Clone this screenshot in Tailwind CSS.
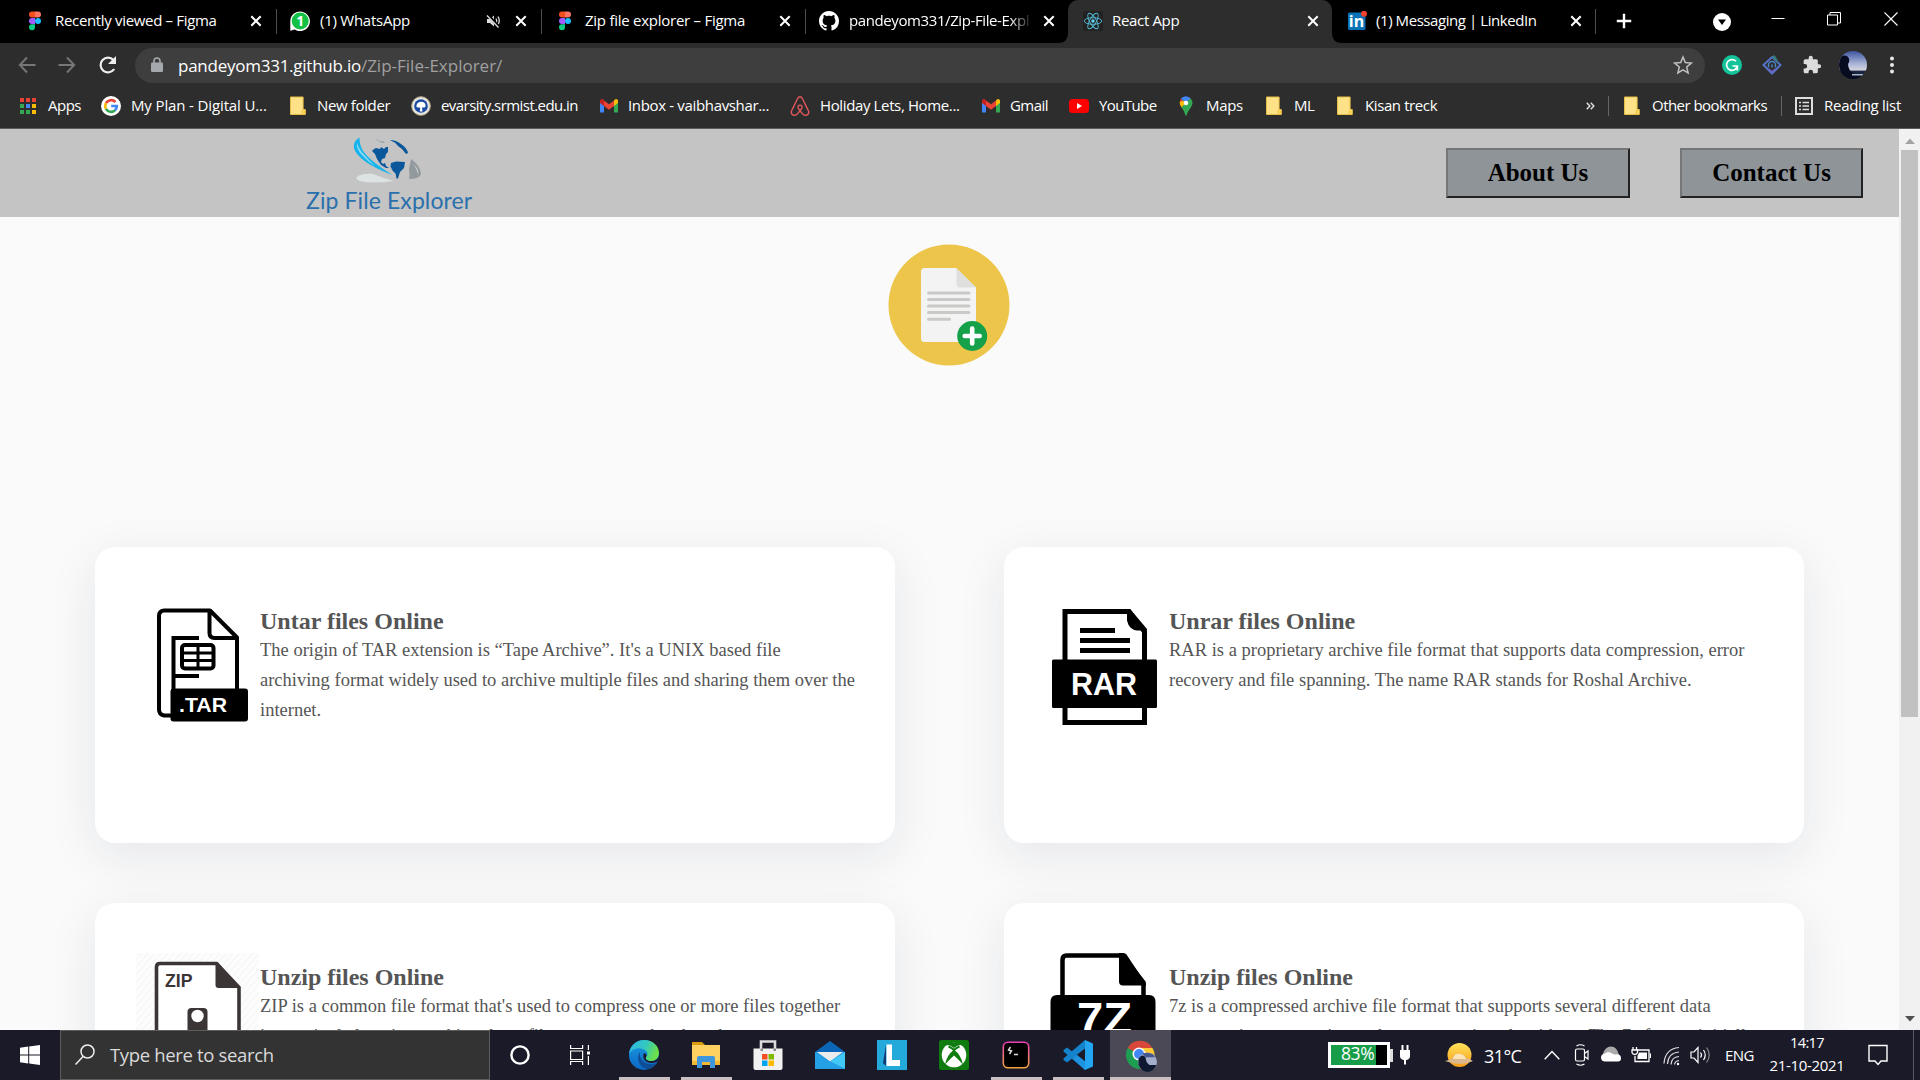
<!DOCTYPE html>
<html lang="en">
<head>
<meta charset="utf-8">
<title>React App</title>
<script src="https://cdn.jsdelivr.net/npm/@tailwindcss/browser@4"></script>
</head>
<body class="w-[1920px] h-[1080px] overflow-hidden bg-black font-['Open_Sans','Noto_Sans',sans-serif] text-[15px] text-white flex flex-col">

<!-- Shared icons -->
<svg class="hidden">
  <symbol id="close" viewBox="0 0 20 20"><path d="M5.3 5.3 14.7 14.7M14.7 5.3 5.3 14.7" stroke="#fff" stroke-width="2" fill="none"/></symbol>
  <symbol id="figma" viewBox="0 0 20 20"><path d="M7 .6h3v6H7a3 3 0 0 1 0-6z" fill="#f24e1e"/><path d="M10 .6h3a3 3 0 0 1 0 6h-3z" fill="#ff7262"/><path d="M7 6.900h3v6H7a3 3 0 0 1 0-6z" fill="#a259ff"/><circle cx="13" cy="9.900" r="3" fill="#1abcfe"/><path d="M7 13.200h3v3a3 3 0 1 1-3-3z" fill="#0acf83"/></symbol>
  <symbol id="folder" viewBox="0 0 20 20"><path d="M2.500 1h12.600v12.500h2V18.500H2.500z" fill="#ffe287" stroke="#e6bd45"/><path d="M14 18.500v-3l1.200-2h2v5z" fill="#fbd75d" stroke="#e6bd45" stroke-width=".7"/></symbol>
  <symbol id="gmail" viewBox="0 0 20 20"><path d="M1 6v10.500h4V8z" fill="#4285f4"/><path d="M15 8v8.500h4V6z" fill="#34a853"/><path d="M15 4.500V10l4-3V5c0-2-2-2.600-3.200-1.500z" fill="#fbbc04"/><path d="M5 10V4.500l5 3.800 5-3.800V10l-5 3.800z" fill="#ea4335"/><path d="M1 5v2l4 3V4.500L4.200 3.500C3 2.500 1 3.200 1 5z" fill="#c5221f"/></symbol>
</svg>

<!-- Tab strip -->
<div class="h-[43px] shrink-0 flex items-start bg-black">
  <div class="w-[276px] h-[42px] flex items-center pl-[25px] pr-[10px]">
    <svg class="w-5 h-5 mr-2.5"><use href="#figma"/></svg>
    <span class="flex-1 whitespace-nowrap pb-[2px] tracking-[-0.33px]">Recently viewed – Figma</span>
    <svg class="w-5 h-5"><use href="#close"/></svg>
  </div>
  <div class="w-[265px] h-[42px] flex items-center pl-[14px] pr-[10px] relative">
    <div class="absolute left-0 top-[9px] w-px h-[25px] bg-[#4d4d4d]"></div>
    <svg class="w-5 h-5 mr-2.5" viewBox="0 0 20 20"><path d="M.3 19.700V10a9.800 9.800 0 1 1 4.500 8.500z" fill="#fff"/><circle cx="10.200" cy="9.900" r="8.500" fill="#12c143"/><text x="10.300" y="14.800" text-anchor="middle" font-size="14" font-weight="700" fill="#fff">1</text></svg>
    <span class="flex-1 whitespace-nowrap pb-[2px] tracking-[-0.25px]">(1) WhatsApp</span>
    <svg class="w-5 h-5 mr-2" viewBox="0 0 20 20" fill="none" stroke="#ddd" stroke-width="1.300"><path d="M4 8h3l4-3.500v11L7 12H4z" fill="#ddd" stroke="none"/><path d="M13 7.500q1.500 2.500 0 5M15 5.500q2.500 4.500 0 8"/><path d="M4.500 3.500 16.500 16.500" stroke="#000" stroke-width="3"/><path d="M4 4.500 15.500 16.500"/></svg>
    <svg class="w-5 h-5"><use href="#close"/></svg>
  </div>
  <div class="w-[264px] h-[42px] flex items-center pl-[14px] pr-[10px] relative">
    <div class="absolute left-0 top-[9px] w-px h-[25px] bg-[#4d4d4d]"></div>
    <svg class="w-5 h-5 mr-2.5"><use href="#figma"/></svg>
    <span class="flex-1 whitespace-nowrap pb-[2px] tracking-[-0.26px]">Zip file explorer – Figma</span>
    <svg class="w-5 h-5"><use href="#close"/></svg>
  </div>
  <div class="w-[263px] h-[42px] flex items-center pl-[14px] pr-[9px] relative">
    <div class="absolute left-0 top-[9px] w-px h-[25px] bg-[#4d4d4d]"></div>
    <svg class="w-5 h-5 mr-2.5" viewBox="0 0 16 16"><path fill="#fff" d="M8 0C3.580 0 0 3.580 0 8c0 3.540 2.290 6.530 5.470 7.590.4.070.55-.17.55-.38 0-.19-.01-.82-.01-1.490-2.010.37-2.530-.49-2.690-.94-.09-.23-.48-.94-.82-1.130-.28-.15-.68-.52-.01-.53.63-.01 1.080.58 1.230.82.72 1.210 1.870.87 2.330.66.07-.52.28-.87.51-1.070-1.780-.2-3.640-.89-3.640-3.950 0-.87.31-1.590.82-2.150-.08-.2-.36-1.020.08-2.120 0 0 .67-.21 2.200.82.64-.18 1.320-.27 2-.27s1.360.09 2 .27c1.530-1.040 2.200-.82 2.200-.82.44 1.100.16 1.920.08 2.120.51.56.82 1.270.82 2.150 0 3.070-1.870 3.750-3.650 3.950.29.25.54.73.54 1.480 0 1.070-.01 1.930-.01 2.200 0 .21.15.46.55.38A8.010 8.010 0 0 0 16 8c0-4.420-3.580-8-8-8z"/></svg>
    <span class="w-[183px] overflow-hidden whitespace-nowrap pb-[2px] tracking-[-0.4px] mask-r-from-88% mask-r-to-100%">pandeyom331/Zip-File-Expl</span>
    <svg class="w-5 h-5 ml-auto"><use href="#close"/></svg>
  </div>
  <div class="w-[264px] h-[43px] flex items-center pb-px pl-[15px] pr-[9px] relative bg-[#2d2d2d] rounded-t-[10px]">
    <svg class="absolute -left-[10px] bottom-0 w-[10px] h-[10px]" viewBox="0 0 10 10"><path d="M10 0v10H0Q10 10 10 0z" fill="#2d2d2d"/></svg>
    <svg class="absolute -right-[10px] bottom-0 w-[10px] h-[10px]" viewBox="0 0 10 10"><path d="M0 0v10h10Q0 10 0 0z" fill="#2d2d2d"/></svg>
    <svg class="w-5 h-5 mr-[9px]" viewBox="0 0 20 20"><rect width="20" height="20" rx="2" fill="#222"/><g fill="none" stroke="#61dafb" stroke-width=".9" opacity=".85"><ellipse cx="10" cy="10" rx="8.800" ry="3.300"/><ellipse cx="10" cy="10" rx="8.800" ry="3.300" transform="rotate(60 10 10)"/><ellipse cx="10" cy="10" rx="8.800" ry="3.300" transform="rotate(120 10 10)"/></g><circle cx="10" cy="10" r="1.700" fill="#61dafb"/></svg>
    <span class="flex-1 whitespace-nowrap pb-[2px] tracking-[-0.33px]">React App</span>
    <svg class="w-5 h-5"><use href="#close"/></svg>
  </div>
  <div class="w-[264px] h-[42px] flex items-center pl-[15px] pr-[10px] relative">
    <div class="absolute right-0 top-[9px] w-px h-[25px] bg-[#4d4d4d]"></div>
    <svg class="w-5 h-5 mr-[9px]" viewBox="0 0 20 20"><rect x="1" y="1.500" width="17.500" height="17.500" rx="1.500" fill="#0a73b8"/><text x="9.500" y="16" text-anchor="middle" font-size="16" font-weight="700" fill="#fff">in</text><circle cx="17" cy="2.800" r="3" fill="#f0402f"/></svg>
    <span class="flex-1 whitespace-nowrap pb-[2px] tracking-[-0.43px]">(1) Messaging | LinkedIn</span>
    <svg class="w-5 h-5"><use href="#close"/></svg>
  </div>
  <svg class="w-4 h-4 mt-[13px] ml-[20px]" viewBox="0 0 16 16"><path d="M8 .8v14.400M.8 8h14.400" stroke="#fff" stroke-width="2.400"/></svg>
  <svg class="w-[18px] h-[18px] mt-[13px] ml-[81px]" viewBox="0 0 18 18"><circle cx="9" cy="9" r="9" fill="#fff"/><path d="M5 6.500h8L9 12z" fill="#000"/></svg>
  <svg class="w-[14px] h-[14px] mt-[12px] ml-[40px]" viewBox="0 0 14 14"><path d="M.5 6.500h13" stroke="#fff"/></svg>
  <svg class="w-[14px] h-[14px] mt-[12px] ml-[42px]" viewBox="0 0 14 14" fill="none" stroke="#fff"><path d="M.5 3h10v10h-10zM3 3V.5h10.500v10.500h-3"/></svg>
  <svg class="w-[14px] h-[14px] mt-[12px] ml-[43px]" viewBox="0 0 14 14"><path d="M.5.5l13 13M13.500.5l-13 13" stroke="#fff" stroke-width="1.100"/></svg>
</div>

<!-- Address bar -->
<div class="h-[44px] shrink-0 bg-[#2d2d2d] flex items-center">
  <svg class="w-[18px] h-[18px] ml-[18px]" viewBox="0 0 18 18" fill="none" stroke="#777" stroke-width="1.900"><path d="M17.500 9H2M9 1.500 1.800 9 9 16.500"/></svg>
  <svg class="w-[18px] h-[18px] ml-[22px]" viewBox="0 0 18 18" fill="none" stroke="#777" stroke-width="1.900"><path d="M.5 9H16M9 1.500 16.200 9 9 16.500"/></svg>
  <svg class="w-[20px] h-[20px] ml-[22px]" viewBox="0 0 20 20"><path d="M16.200 14A7.400 7.400 0 1 1 15.500 5" fill="none" stroke="#eee" stroke-width="2.200"/><path d="M18 1v8h-8z" fill="#eee"/></svg>
  <div class="w-[1570px] h-[35px] ml-[17px] rounded-full bg-[#3e3e3e] flex items-center pl-[16px] pr-[12px]">
    <svg class="w-[12px] h-[16px] mr-[15px]" viewBox="0 0 12 16"><rect y="5.500" width="12" height="9.500" rx="1.200" fill="#a5a8ac"/><path d="M3 6V4a3 3 0 0 1 6 0v2" fill="none" stroke="#a5a8ac" stroke-width="1.600"/></svg>
    <span class="text-[17px] tracking-[-0.25px] pt-px">pandeyom331.github.io</span><span class="text-[17px] text-[#a0a0a0] flex-1 pt-px">/Zip-File-Explorer/</span>
    <svg class="w-5 h-5" viewBox="0 0 20 20"><path d="m10 2 2.300 5.600 6 .5-4.600 3.900 1.400 5.900L10 14.800l-5.100 3.100L6.300 12 1.700 8.100l6-.5z" fill="none" stroke="#c0c0c0" stroke-width="1.500"/></svg>
  </div>
  <svg class="w-5 h-5 ml-[17px]" viewBox="0 0 20 20"><circle cx="10" cy="10" r="10" fill="#15c39a"/><path d="M14 6.300A5.400 5.400 0 1 0 15.300 11H10.500M15.300 11v4.500" fill="none" stroke="#fff" stroke-width="1.700"/></svg>
  <svg class="w-5 h-5 ml-[20px]" viewBox="0 0 20 20"><path d="M10 2 18.500 10 10 18.500 1.500 10z" fill="none" stroke="#5572c9" stroke-width="2"/><path d="M10 2.500 17 9l-3-7-2-2z" fill="#347e7d"/><path d="M6.500 12.500v-2.500a3.500 3.500 0 0 1 7 0v2.500M10 9.500v3" fill="none" stroke="#4d83c4" stroke-width="1.500"/><path d="m7 14 3 3 3-3" fill="none" stroke="#7562c4" stroke-width="1.500"/></svg>
  <svg class="w-5 h-5 ml-[20px]" viewBox="0 0 24 24"><path fill="#dcdcdc" d="M20.500 11H19V7a2 2 0 0 0-2-2h-4V3.500a2.500 2.500 0 0 0-5 0V5H4a2 2 0 0 0-2 2v3.800h1.500a2.700 2.700 0 0 1 0 5.400H2V20a2 2 0 0 0 2 2h3.800v-1.500a2.700 2.700 0 0 1 5.400 0V22H17a2 2 0 0 0 2-2v-4h1.500a2.500 2.500 0 0 0 0-5z"/></svg>
  <svg class="w-7 h-7 ml-[17px] rounded-full" viewBox="0 0 28 28"><defs><linearGradient id="sky" x1="0" y1="0" x2="0" y2="1"><stop offset="0" stop-color="#3e55a0"/><stop offset=".45" stop-color="#a9b3d6"/><stop offset=".68" stop-color="#d5d5de"/><stop offset=".72" stop-color="#1b2744"/><stop offset="1" stop-color="#101a33"/></linearGradient></defs><rect width="28" height="28" fill="url(#sky)"/><path d="M0 8q3-5 8-3 4 3 1 8 0 6 6 10l6 2v3H0z" fill="#060d20"/><path d="M13 23h11v1.500H13z" fill="#a9b4c6"/></svg>
  <svg class="w-[6px] h-[18px] ml-[22px]" viewBox="0 0 6 18" fill="#e8e8e8"><circle cx="3" cy="2.500" r="2"/><circle cx="3" cy="9" r="2"/><circle cx="3" cy="15.500" r="2"/></svg>
</div>

<!-- Bookmarks bar -->
<div class="h-[42px] shrink-0 bg-[#2d2d2d] border-b border-[#5c5c5c] flex items-center pl-[18px] pb-[3px] whitespace-nowrap">
  <div class="w-[83px] flex items-center gap-2.5"><svg class="w-5 h-5 shrink-0" viewBox="0 0 20 20"><path d="M2 2h4v4H2zM8 2h4v4H8zM14 2h4v4h-4z" fill="#ea4335"/><path d="M2 8h4v4H2zM2 14h4v4H2z" fill="#34a853"/><path d="M8 8h4v4H8z" fill="#4285f4"/><path d="M14 8h4v4h-4zM14 14h4v4h-4z" fill="#fbbc04"/><path d="M8 14h4v4H8z" fill="#34a853"/></svg><span class="pb-[2px] tracking-[-0.5px]">Apps</span></div>
  <div class="w-[187px] flex items-center gap-2.5"><svg class="w-5 h-5 shrink-0" viewBox="0 0 20 20"><circle cx="10" cy="10" r="10" fill="#fff"/><g fill="none" stroke-width="2.600"><path d="M14.400 6A5.800 5.800 0 0 0 5 7.200" stroke="#ea4335"/><path d="M5 7.200a5.800 5.800 0 0 0 0 5.600" stroke="#fbbc04"/><path d="M5 12.800a5.800 5.800 0 0 0 9 1.500" stroke="#34a853"/><path d="M14 14.300A5.800 5.800 0 0 0 15.800 10H10.200" stroke="#4285f4"/></g></svg><span class="pb-[2px] tracking-[-0.13px]">My Plan - Digital U...</span></div>
  <div class="w-[123px] flex items-center gap-[9px]"><svg class="w-5 h-5 shrink-0"><use href="#folder"/></svg><span class="pb-[2px] tracking-[-0.36px]">New folder</span></div>
  <div class="w-[188px] flex items-center gap-2.5"><svg class="w-5 h-5 shrink-0" viewBox="0 0 20 20"><circle cx="10" cy="10" r="9.300" fill="#e8e6df" stroke="#b9ae92"/><circle cx="10" cy="10" r="6.800" fill="#1a4aa3"/><path d="M5.500 11q-.5-4 3-5 5-1 6 3 .5 3-2 2.500H11l.5 4H8.800l.4-4H7z" fill="#fff"/></svg><span class="pb-[2px] tracking-[-0.56px]">evarsity.srmist.edu.in</span></div>
  <div class="w-[191px] flex items-center gap-[9px]"><svg class="w-5 h-5 shrink-0"><use href="#gmail"/></svg><span class="pb-[2px] tracking-[-0.34px]">Inbox - vaibhavshar...</span></div>
  <div class="w-[191px] flex items-center gap-2.5"><svg class="w-5 h-5 shrink-0" viewBox="0 0 20 20" fill="none" stroke="#e0565b" stroke-width="1.400"><path d="M10 .8c1.500 0 2 1 2.500 2 2 4.200 4.500 8.800 6 12.200 1.200 3.500-2.800 5.500-5.500 3.200-5-4.500-6.800-8.900-3-9.100 3.800.2 2 4.600-3 9.100C4.300 20.500.3 18.500 1.500 15 3 11.600 5.500 7 7.500 2.800 8 1.800 8.500.8 10 .8z"/></svg><span class="pb-[2px] tracking-[-0.37px]">Holiday Lets, Home...</span></div>
  <div class="w-[88px] flex items-center gap-[9px]"><svg class="w-5 h-5 shrink-0"><use href="#gmail"/></svg><span class="pb-[2px] tracking-[-0.54px]">Gmail</span></div>
  <div class="w-[107px] flex items-center gap-2.5"><svg class="w-5 h-5 shrink-0" viewBox="0 0 20 20"><rect y="3" width="20" height="14" rx="3.500" fill="#f00"/><path d="m8 7 5 3-5 3z" fill="#fff"/></svg><span class="pb-[2px] tracking-[-0.6px]">YouTube</span></div>
  <div class="w-[88px] flex items-center gap-2.5"><svg class="w-5 h-5 shrink-0" viewBox="0 0 20 20"><path d="M10 .5A6.500 6.500 0 0 0 5 2.800L10 7l4-5z" fill="#4285f4"/><path d="M5 2.800A6.300 6.300 0 0 0 4 8.500L8 6z" fill="#ea4335"/><path d="M3.600 6q0 3 2 5.500L14 3l-5 1z" fill="#fbbc04"/><path d="M14.500 2.300q4 4.700 0 9.700-3 3.500-4 7.500h-1q-1-4.500-4-8z" fill="#34a853"/><path d="M14.500 2.300 10 7 5 2.800Q7 .5 10 .5t4.500 1.800z" fill="#4285f4"/><circle cx="10" cy="7" r="2.300" fill="#fff"/></svg><span class="pb-[2px] tracking-[-0.3px]">Maps</span></div>
  <div class="w-[71px] flex items-center gap-2.5"><svg class="w-5 h-5 shrink-0"><use href="#folder"/></svg><span class="pb-[2px] tracking-[-0.4px]">ML</span></div>
  <div class="w-[251px] flex items-center gap-2.5"><svg class="w-5 h-5 shrink-0"><use href="#folder"/></svg><span class="pb-[2px] tracking-[-0.4px]">Kisan treck</span></div>
  <svg class="w-[9px] h-[8px]" viewBox="0 0 9 8" fill="none" stroke="#ddd" stroke-width="1.500"><path d="m.8.8 3 3.200-3 3.200M4.800.8l3 3.200-3 3.200"/></svg>
  <div class="w-px h-5 bg-[#666] ml-[13px]"></div>
  <div class="w-[159px] ml-[13px] flex items-center gap-2.5"><svg class="w-5 h-5 shrink-0"><use href="#folder"/></svg><span class="pb-[2px] tracking-[-0.54px]">Other bookmarks</span></div>
  <div class="w-px h-5 bg-[#666]"></div>
  <div class="ml-[12px] flex items-center gap-2.5"><svg class="w-5 h-5 shrink-0" viewBox="0 0 20 20"><rect x="2" y="2" width="16" height="16" fill="none" stroke="#ddd" stroke-width="2"/><path d="M5 6.500h2M5 10h2M5 13.500h2M8.500 6.500H15M8.500 10H15M8.500 13.500H15" stroke="#ddd" stroke-width="1.700"/></svg><span class="pb-[2px] tracking-[-0.27px]">Reading list</span></div>
</div>

<!-- Page viewport -->
<div class="h-[901px] shrink-0 flex bg-[#fafafa] overflow-hidden">
  <main class="w-[1899px] h-[901px] overflow-hidden font-['Liberation_Serif',serif] text-[#555]">
    <header class="h-[88px] bg-[#c4c4c4] flex items-center pr-[36px] gap-[50px]">
      <div class="w-[190px] h-[88px] ml-[306px] pt-[6px] flex flex-col">
        <svg class="w-[74px] h-[48px] ml-[44px] shrink-0" viewBox="350 135 74 48">
          <path d="M356 178q4-5 17-4 10 4 21 7-14 2-25 1.500-12-1-13-4.500z" fill="#dde2e2"/>
          <path d="M359.500 137.500q-7 4-5.500 11 5 14 38.500 26.500-24-15-30-25-3-5-3-12.500z" fill="#16b4ec"/>
          <path d="M357 143q-1 5 4 11 6 7 14 12-11-11-14-15-3-4-4-8z" fill="#8fd9f2"/>
          <path d="M374 149l2-1 4 1 1-2 3 2 2-2 2 0 0 5-2 2-1 4-3 1-1 3 2 2 2-1 1 3 3 2-3 0-5-3-4-6-2-5-3-3z" fill="#0b579c"/>
          <path d="M391 163l5-1.500 9 .5-1 6-4 4-2 6.500-1.500 0-1-5-3-3-2-4z" fill="#0b579c"/>
          <path d="M390 140q6 0 11 4 6 4 7 9l-2 1-4-5-4-3q-3-4-8-6z" fill="#0b579c"/>
          <path d="M374 139q4 0 7 2l3 0 1 2-4 0-2-2z" fill="#a2abb0"/>
          <path d="M411 159q9 6 10 15-1 5-12 5 1-4 0-10z" fill="#939a9e"/>
          <path d="M412 163q6 6 6 13 1-6-2-9z" fill="#d4d6d7"/>
        </svg>
        <div class="mt-[2px] text-[23px] leading-[30px] text-[#2a70ad] whitespace-nowrap tracking-[0.1px] font-['Lato',sans-serif]">Zip File Explorer</div>
      </div>
      <button class="ml-auto w-[184px] h-[50px] border-2 border-t-[#767676] border-l-[#767676] border-b-[#222] border-r-[#222] bg-[#8e9498] text-black font-bold text-[25px] leading-none pb-[1px]">About Us</button>
      <button class="w-[183px] h-[50px] border-2 border-t-[#767676] border-l-[#767676] border-b-[#222] border-r-[#222] bg-[#8e9498] text-black font-bold text-[25px] leading-none pb-[1px]">Contact Us</button>
    </header>

    <div class="h-[330px] flex justify-center items-start pt-[27px] pr-[1px]">
      <svg class="w-[122px] h-[122px]" viewBox="0 0 122 122">
        <circle cx="61" cy="61" r="60.500" fill="#edc54a"/>
        <path d="M36.500 24H68l20 19.500V94.500a3.500 3.500 0 0 1-3.500 3.500h-48a3.500 3.500 0 0 1-3.500-3.500V27.500a3.500 3.500 0 0 1 3.500-3.500z" fill="#f3f3f3"/>
        <path d="M68.500 24 88 43.500H72a3.500 3.500 0 0 1-3.500-3.500z" fill="#dfdfdd"/>
        <path d="M40.500 49H81M40.500 55.600H81M40.500 62H81M40.500 68.600H81M40.500 75.300H61.500" stroke="#c9c9c7" stroke-width="3" stroke-linecap="round"/>
        <circle cx="84.200" cy="92" r="15" fill="#14a14a"/>
        <path d="M84.200 84.500v15M76.700 92h15" stroke="#fff" stroke-width="4.600" stroke-linecap="round"/>
      </svg>
    </div>

    <div class="grid grid-cols-[800px_800px] gap-x-[109px] gap-y-[60px] pl-[95px]">
      <article class="h-[296px] rounded-[20px] bg-white shadow-[0_13px_50px_rgba(20,30,70,0.09)] flex pl-[41px] pt-[50px]">
        <svg class="w-[124px] h-[140px] shrink-0" viewBox="136 597 124 140" fill="none" stroke="#000" stroke-width="4">
          <path d="M172 715.500h-8q-5-1-5-6V616q0-5 5-5.500h46l27 27V690M209.500 611v22q0 5 5 5h22" stroke-linejoin="round"/>
          <path d="M173.500 690v-52H199M173.500 676H199"/>
          <rect x="182" y="645" width="31.500" height="23.500" rx="3"/><path d="M182 653h32M182 660.500h32M198 645v23" stroke-width="3"/>
          <rect x="170.500" y="688.500" width="77.500" height="33" rx="3" fill="#000" stroke="none"/>
          <text x="179" y="712" textLength="48" lengthAdjust="spacingAndGlyphs" font-family="Liberation Sans" font-size="21" font-weight="700" fill="#fff" stroke="none">.TAR</text>
        </svg>
        <div class="pt-[10px] text-[18.500px] leading-[30px]">
          <h2 class="font-bold text-[24px] leading-[28px]">Untar files Online</h2>
          <p class="whitespace-nowrap">The origin of TAR extension is “Tape Archive”. It's a UNIX based file<br>archiving format widely used to archive multiple files and sharing them over the<br>internet.</p>
        </div>
      </article>

      <article class="h-[296px] rounded-[20px] bg-white shadow-[0_13px_50px_rgba(20,30,70,0.09)] flex pl-[41px] pt-[50px]">
        <svg class="w-[124px] h-[140px] shrink-0" viewBox="1045 597 124 140" fill="none" stroke="#000" stroke-width="5">
          <path d="M1065 662v-50.500h64l15.500 20V662M1065 706v16.500h79.500V706"/>
          <path d="M1127 609h3l17 20v1.500h-10q-8-1-10-10z" fill="#000" stroke="none"/>
          <path d="M1080 630.500h35M1080 640.500h50M1080 650.500h50"/>
          <rect x="1052" y="659.500" width="105" height="48.500" rx="1.500" fill="#000" stroke="none"/>
          <text x="1071" y="694.500" textLength="66" lengthAdjust="spacingAndGlyphs" font-family="Liberation Sans" font-size="32" font-weight="700" fill="#fff" stroke="none">RAR</text>
        </svg>
        <div class="pt-[10px] text-[18.500px] leading-[30px]">
          <h2 class="font-bold text-[24px] leading-[28px]">Unrar files Online</h2>
          <p class="whitespace-nowrap">RAR is a proprietary archive file format that supports data compression, error<br>recovery and file spanning. The name RAR stands for Roshal Archive.</p>
        </div>
      </article>

      <article class="h-[296px] rounded-[20px] bg-white shadow-[0_13px_50px_rgba(20,30,70,0.09)] flex pl-[41px] pt-[50px]">
        <svg class="w-[124px] h-[140px] shrink-0" viewBox="136 953 124 140" fill="none">
          <defs><pattern id="hatch" width="5" height="5" patternUnits="userSpaceOnUse" patternTransform="rotate(40)"><rect width="5" height="5" fill="#fdfdfd"/><rect width="2" height="5" fill="#f8f8f8"/></pattern></defs>
          <rect x="136" y="953" width="123" height="140" fill="url(#hatch)"/>
          <path d="M156.500 1090V967q0-3.500 3.500-3.500h56.500l22.500 24V1090" fill="#fff" stroke="#3b3536" stroke-width="3.600"/>
          <path d="M215.500 962h2l23 26h-22q-3 0-3-3z" fill="#3b3536"/>
          <text x="165" y="987" textLength="27.500" lengthAdjust="spacingAndGlyphs" font-family="Liberation Sans" font-size="18" font-weight="700" fill="#3b3536">ZIP</text>
          <path d="M187.500 1080v-68q0-4 4-4h12q4 0 4 4v68z" fill="#3b3536"/><circle cx="197.500" cy="1016" r="6.200" fill="#fff"/>
        </svg>
        <div class="pt-[10px] text-[18.500px] leading-[30px]">
          <h2 class="font-bold text-[24px] leading-[28px]">Unzip files Online</h2>
          <p class="whitespace-nowrap">ZIP is a common file format that's used to compress one or more files together<br>into a single location, making those files easy to send and read.</p>
        </div>
      </article>

      <article class="h-[296px] rounded-[20px] bg-white shadow-[0_13px_50px_rgba(20,30,70,0.09)] flex pl-[41px] pt-[50px]">
        <svg class="w-[124px] h-[140px] shrink-0" viewBox="1045 953 124 140">
          <path d="M1062.500 997v-37q0-4.500 4-4.500h56l21 27V997" fill="#fff" stroke="#000" stroke-width="4.500"/>
          <path d="M1119 953h4.500q2 0 3 1.500l19.500 29.500V985.500h-23q-4 0-4-4z"/>
          <path d="M1057 995h92q6.500 0 6.500 7v88h-105v-88q0-7 6.500-7z"/>
          <text x="1077" y="1034" textLength="55" lengthAdjust="spacingAndGlyphs" font-family="Liberation Sans" font-size="44" font-weight="700" fill="#fff">7Z</text>
        </svg>
        <div class="pt-[10px] text-[18.500px] leading-[30px]">
          <h2 class="font-bold text-[24px] leading-[28px]">Unzip files Online</h2>
          <p class="whitespace-nowrap">7z is a compressed archive file format that supports several different data<br>compression, encryption and pre-processing algorithms. The 7z format initially</p>
        </div>
      </article>
    </div>
  </main>
  <div class="w-[21px] h-[901px] bg-[#f1f1f1] flex flex-col items-center">
    <svg class="w-[10px] h-[6px] mt-[9px] mb-[6px] shrink-0" viewBox="0 0 10 6"><path d="M0 6 5 .5 10 6z" fill="#a3a3a3"/></svg>
    <div class="w-[17px] h-[567px] bg-[#c1c1c1] shrink-0"></div>
    <svg class="w-[10px] h-[6px] mt-auto mb-[8px] shrink-0" viewBox="0 0 10 6"><path d="M0 0h10L5 5.500z" fill="#505050"/></svg>
  </div>
</div>

<!-- Taskbar -->
<div class="h-[50px] shrink-0 bg-[#1b1a29] flex items-start">
  <svg class="w-5 h-5 mt-[15px] ml-5 mr-5" viewBox="0 0 20 20" fill="#fff"><path d="M0 2.800 8.200 1.600v8H0zM9.200 1.500 20 0v9.600H9.200zM0 10.500h8.200v8L0 17.300zM9.200 10.500H20V20L9.200 18.600z"/></svg>
  <div class="w-[430px] h-[50px] bg-[#333] border border-[#5c5c5c] flex items-center pl-[14px]">
    <svg class="w-[20px] h-[22px] mr-[15px]" viewBox="0 0 20 22" fill="none" stroke="#eee" stroke-width="1.500"><circle cx="12.500" cy="7.500" r="6.500"/><path d="M8 12.500.5 20.500"/></svg>
    <span class="text-[18.500px] tracking-[-0.34px] text-[#dadada] whitespace-nowrap pb-px">Type here to search</span>
  </div>
  <svg class="w-5 h-5 mt-[15px] ml-[20px]" viewBox="0 0 20 20"><circle cx="10" cy="10" r="8.600" fill="none" stroke="#fff" stroke-width="2.400"/></svg>
  <svg class="w-5 h-5 mt-[15px] ml-[40px]" viewBox="0 0 20 20" fill="none" stroke="#fff" stroke-width="1.200"><path d="M.6 0v3.500h12V0M.6 6h12v8.500H.600zM.6 20v-3.500h12V20M18.400 0v5M18.400 11v9"/><path d="M17 6.500h3v3h-3z" fill="#fff" stroke="none"/></svg>

  <div class="w-[51px] h-[50px] ml-[29px] flex flex-col items-center justify-between pt-[10px]">
    <svg class="w-[30px] h-[30px] mr-[2px]" viewBox="0 0 30 30"><defs><linearGradient id="eg" x1="0" y1="0" x2="1" y2=".3"><stop offset="0" stop-color="#2ab6e8"/><stop offset=".6" stop-color="#35c8bd"/><stop offset="1" stop-color="#6be04a"/></linearGradient><linearGradient id="eb" x1="0" y1="0" x2="0" y2="1"><stop offset="0" stop-color="#1b9de2"/><stop offset="1" stop-color="#0b66c4"/></linearGradient></defs><circle cx="15" cy="15" r="15" fill="url(#eb)"/><path d="M0 14C1 5 8 0 15 0c9 0 15 6 15 13 0 5-4 8-8 8-4 0-6-2-5-4 2-2 2-4 0-6C12 6 3 8 0 14z" fill="url(#eg)"/><path d="M11 12c-5 8 1 17 9 17q5-2 8-6-4 2-8 1c-6-1-10-6-9-12z" fill="#104d96"/><path d="M15 13c-2 4 0 10 8 10 3 0 5-1 6.500-2.500L30 15c-1 5-5 6.500-8 6-4 0-6-2-5-4 1-1 1-3-2-4z" fill="#1b1a29"/></svg>
    <div class="w-[51px] h-[3px] bg-[#cbc0c1]"></div>
  </div>
  <div class="w-[51px] h-[50px] ml-[11px] flex flex-col items-center justify-between pt-[9px]">
    <svg class="w-[30px] h-[30px] mr-[2px]" viewBox="0 0 30 30"><path d="M1 3h10l3 3v4H1z" fill="#d99a0b"/><path d="M1 6h28v20H1z" fill="#ffd160"/><path d="M1 22h28v4H1z" fill="#f2b735"/><path d="M6 29V19q0-2 2-2h14q2 0 2 2v10h-5v-6h-8v6z" fill="#3e96dd"/></svg>
    <div class="w-[51px] h-[3px] bg-[#cbc0c1]"></div>
  </div>
  <div class="w-[51px] h-[50px] ml-[11px] flex flex-col items-center pt-[10px]">
    <svg class="w-[30px] h-[30px] mr-[2px]" viewBox="0 0 30 30"><path d="M8 12V1.500h14V12" fill="none" stroke="#dcdcdc" stroke-width="2.600"/><path d="M.5 8.500h29V28q0 2-2 2h-25q-2 0-2-2z" fill="#f1f1f1"/><path d="M7.500 8.500h2.500v2.500H7.500zM20.500 8.500H23v2.500h-2.500z" fill="#888"/><path d="M9 14h5.500v5.500H9z" fill="#f25022"/><path d="M15.500 14H21v5.500h-5.500z" fill="#7fba00"/><path d="M9 20.500h5.500V26H9z" fill="#00a4ef"/><path d="M15.500 20.500H21V26h-5.500z" fill="#ffb900"/></svg>
  </div>
  <div class="w-[51px] h-[50px] ml-[11px] flex flex-col items-center pt-[10px]">
    <svg class="w-[30px] h-[30px] mr-[2px]" viewBox="0 0 30 30"><path d="M0 12 15 1l15 11H0z" fill="#0b66b8"/><path d="M0 12h30v17H0z" fill="#1a93dc"/><path d="M2 12h26L15 21.500z" fill="#ececec"/><path d="m30 12-15 9.500L30 29z" fill="#41c8f6"/><path d="M0 12l15 9.500L30 29H0z" fill="#259fe6"/></svg>
  </div>
  <div class="w-[51px] h-[50px] ml-[11px] flex flex-col items-center pt-[10px]">
    <svg class="w-[30px] h-[30px] mr-[2px]" viewBox="0 0 30 30"><rect width="30" height="30" fill="#23a9da"/><path d="M9 5 6 23l3 3V5z" fill="#123a77"/><path d="M9.500 4.500h5.500v15.500h8V26H9.500z" fill="#fff"/></svg>
  </div>
  <div class="w-[51px] h-[50px] ml-[11px] flex flex-col items-center pt-[10px]">
    <svg class="w-[30px] h-[30px] mr-[2px]" viewBox="0 0 30 30"><rect width="30" height="30" rx="2.500" fill="#107c10"/><circle cx="15" cy="15" r="12.300" fill="#fff"/><path d="M6.500 5.500Q10 4 15 8q5-4 8.500-2.500l-3-3h-11z" fill="#107c10"/><path d="M15 9.500Q8 15 6 24.500 13 17 15 15.500q2 1.500 9 9Q22 15 15 9.500z" fill="#107c10"/><path d="M9.500 6.500Q13 8 15 10q2-2 5.500-3.500" stroke="#107c10" stroke-width="2" fill="none"/></svg>
  </div>
  <div class="w-[51px] h-[50px] ml-[11px] flex flex-col items-center justify-between pt-[11px]">
    <svg class="w-[28px] h-[28px] mr-[2px]" viewBox="0 0 28 28"><defs><linearGradient id="tg" x1="0" y1="0" x2="0" y2="1"><stop offset="0" stop-color="#e83fb2"/><stop offset="1" stop-color="#f2a33f"/></linearGradient></defs><rect x="1.300" y="1.300" width="25.400" height="25.400" rx="4.500" fill="#000" stroke="url(#tg)" stroke-width="1.600"/><path d="M8.500 6 6.500 9l3 1-2 3M12 13.500h4" stroke="#ddd" stroke-width="1.500" fill="none"/></svg>
    <div class="w-[51px] h-[3px] bg-[#cbc0c1]"></div>
  </div>
  <div class="w-[51px] h-[50px] ml-[11px] flex flex-col items-center justify-between pt-[10px]">
    <svg class="w-[30px] h-[30px] mr-[2px]" viewBox="0 0 30 30"><path d="M22 0 30 3.500v23L22 30z" fill="#23a5f1"/><path d="M22 0v8.500L4 22.500 0.500 20v-1.500L22 0z" fill="#1583cb"/><path d="M22 30v-8.500L4 7.500.5 10v1.500z" fill="#1583cb"/><path d="M22 21.500V30l-12-11.300 4-3.700z" fill="#1f93df"/></svg>
    <div class="w-[51px] h-[3px] bg-[#cbc0c1]"></div>
  </div>
  <div class="w-[61px] h-[50px] ml-[6px] bg-[#4a4955] flex flex-col items-center justify-between pt-[10px]">
    <svg class="w-[32px] h-[32px]" viewBox="0 0 32 32"><circle cx="15" cy="15" r="14" fill="#1e9e52"/><path d="M15 15 2.800 8A14 14 0 0 1 27.200 8z" fill="#d9463a"/><path d="M15 15V8h12.500A14 14 0 0 1 15 29l6-11z" fill="#fcc934"/><circle cx="14" cy="14" r="6.500" fill="#fff"/><circle cx="14" cy="14" r="5" fill="#4285f4"/><circle cx="22.500" cy="22" r="9.500" fill="#a3aecb"/><path d="M13.500 19q3-6 7-2 0 5 4 8h7q-3 7-9 7t-9-7z" fill="#0e1830"/><path d="M17 13.800q6-2.500 11 .5l2 3h-9z" fill="#45588f"/></svg>
    <div class="w-[61px] h-[3px] bg-[#cbc0c1]"></div>
  </div>

  <!-- Battery widget -->
  <div class="ml-[157px] mt-[12px] flex items-center">
    <div class="w-[62px] h-[26px] border-[3px] border-white bg-black flex">
      <div class="w-[45px] h-[20px] bg-[#179c48] pl-[10px] pb-[2px] flex items-center whitespace-nowrap text-[17.500px] leading-none tracking-[-0.4px]">83%</div>
    </div>
    <div class="w-[3px] h-[13px] bg-[#ddd]"></div>
    <svg class="w-[12px] h-[20px] ml-[6px]" viewBox="0 0 12 20"><path d="M3.500 0v6M8.500 0v6" stroke="#fff" stroke-width="2"/><path d="M1 5h10v6q0 3-3.500 4H4.500Q1 14 1 11z" fill="#fff"/><path d="M6 14v5.500" stroke="#fff" stroke-width="2"/></svg>
  </div>
  <svg class="w-[30px] h-[30px] mt-[10px] ml-[33px]" viewBox="0 0 30 30"><defs><linearGradient id="sun" x1="0" y1="0" x2="0" y2="1"><stop offset="0" stop-color="#ffe25a"/><stop offset="1" stop-color="#f99d18"/></linearGradient></defs><circle cx="15.500" cy="15" r="12" fill="url(#sun)"/><path d="M1 21q4-1 7-2 2-6 8-5 4 0 6 4 4 1 7 3-6 3-13 3T1 21z" fill="#dcb98c"/><path d="M9 19q1-6 7-5 4 0 6 5z" fill="#fbe3b4"/></svg>
  <span class="mt-[13px] ml-[10px] w-[60px] text-[18px] leading-[26px] tracking-[-0.6px]">31°C</span>
  <svg class="w-[16px] h-[10px] mt-[20px]" viewBox="0 0 16 10"><path d="M.7 9.300 8 1.500l7.300 7.800" fill="none" stroke="#fff" stroke-width="1.400"/></svg>
  <svg class="w-[18px] h-[22px] mt-[14px] ml-[13px]" viewBox="0 0 18 22" fill="none" stroke="#fff" stroke-width="1.200"><rect x="2.500" y="5" width="9" height="12" rx="1.500"/><path d="M11.500 9.500 15 7v8l-3.500-2.500M3.500 2q4-2.500 8 0M3.500 20q4 2.500 8 0"/></svg>
  <svg class="w-[20px] h-[16px] mt-[16px] ml-[10px]" viewBox="0 0 20 16"><path d="M2 8Q4 .5 10 .5T18 9z" fill="#aaa"/><path d="M3.500 15.500Q0 15 0 11.500T4 7.500q3-3 7 0l3 1q6-1 6 4 0 3-3 3z" fill="#fff"/></svg>
  <svg class="w-[20px] h-[18px] mt-[16px] ml-[10px]" viewBox="0 0 20 18" fill="none" stroke="#fff" stroke-width="1.300"><path d="M6 4h12v11.500H4V10"/><path d="M8 6.500h8V13H6.500v-3z" fill="#fff" stroke="none"/><path d="M19.500 7.500v4.500M2 1v3M5.500 1v3M1 4h5.500v2.500q-.5 2-2.700 2T1 6.500z"/></svg>
  <svg class="w-[18px] h-[20px] mt-[16px] ml-[12px]" viewBox="0 0 18 20" fill="none" stroke="#ddd" stroke-width="1.200"><path d="M1 17.500Q2 3 16 1.500M4.500 18Q5 7 16 6M8 18.500Q8.500 11 16 10.500M11.500 18.500q.5-3.500 4.500-4"/><circle cx="15" cy="18" r="1.200" fill="#fff" stroke="none"/></svg>
  <svg class="w-[21px] h-[18px] mt-[16px] ml-[9px]" viewBox="0 0 21 18" fill="none" stroke="#fff" stroke-width="1.200"><path d="M1 6h3l4-4.500v15L4 12H1z"/><path d="M10.500 6.500q2 2.500 0 5M13.500 4q3.500 5 0 10"/><path d="M16.500 1.500q5.500 7.500 0 15" stroke="#888"/></svg>
  <span class="mt-[13px] ml-[14px] w-[44px] text-[15px] leading-[24px] tracking-[-0.6px]">ENG</span>
  <div class="w-[76px] flex flex-col items-center mt-[1px] leading-[23px] whitespace-nowrap">
    <span class="text-[14.500px] tracking-[-0.6px]">14:17</span>
    <span class="text-[15px] tracking-[-0.33px]">21-10-2021</span>
  </div>
  <svg class="w-[20px] h-[22px] mt-[14px] ml-[23px]" viewBox="0 0 20 22"><path d="M1 1.500h18V17h-6l-3 3.500L7 17H1z" fill="none" stroke="#fff" stroke-width="1.400"/></svg>
  <div class="w-px h-[50px] bg-[#5a5965] ml-[25px]"></div>
</div>
</body>
</html>
